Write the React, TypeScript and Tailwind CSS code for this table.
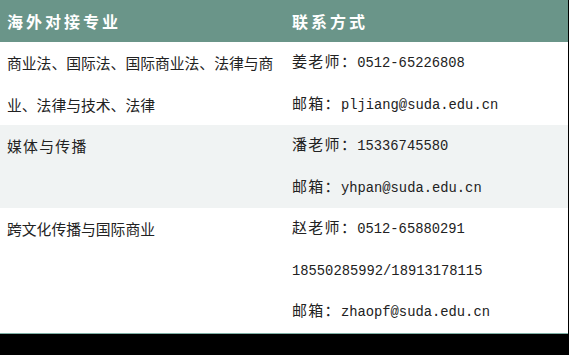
const cjk = '"Noto Sans CJK SC", "Noto Sans", sans-serif';
const mono = '"Liberation Mono", "Noto Sans CJK SC", monospace';

type Line = { label?: string; value: string };

type Row = {
  major: string;
  majorWide?: boolean;
  lines: Line[];
  shaded: boolean;
};

const rows: Row[] = [
  {
    major: '商业法、国际法、国际商业法、法律与商业、法律与技术、法律',
    lines: [
      { label: '姜老师：', value: '0512-65226808' },
      { label: '邮箱：', value: 'pljiang@suda.edu.cn' },
    ],
    shaded: false,
  },
  {
    major: '媒体与传播',
    majorWide: true,
    lines: [
      { label: '潘老师：', value: '15336745580' },
      { label: '邮箱：', value: 'yhpan@suda.edu.cn' },
    ],
    shaded: true,
  },
  {
    major: '跨文化传播与国际商业',
    lines: [
      { label: '赵老师：', value: '0512-65880291' },
      { value: '18550285992/18913178115' },
      { label: '邮箱：', value: 'zhaopf@suda.edu.cn' },
    ],
    shaded: false,
  },
];

export default function App() {
  return (
    <div className="w-[569px] h-[355px] bg-black overflow-hidden">
      <div className="w-[568px] border-b border-[#7fb0a6]">
        {/* 表头 */}
        <div className="flex h-[42px] items-center bg-[#6a9589] text-white font-bold text-[16px] tracking-[3px]" style={{ fontFamily: cjk }}>
          <div className="w-[285px] pl-[7px]">海外对接专业</div>
          <div className="flex-1 pl-[7px]">联系方式</div>
        </div>

        {rows.map((row, i) => (
          <div
            key={i}
            className={`flex text-[#222] ${row.shaded ? 'bg-[#f0f3f3]' : 'bg-white'}`}
          >
            <div
              className={`w-[285px] pl-[7px] pr-[5px] text-[14.8px] leading-[41.5px] ${row.majorWide ? 'tracking-[1.3px]' : ''}`}
              style={{ fontFamily: cjk }}
            >
              {row.major}
            </div>
            <div className="flex-1 pl-[7px]">
              {row.lines.map((l, j) => (
                <div key={j} className="flex h-[41.5px] items-center whitespace-nowrap">
                  <span className="leading-[20px]">
                    {l.label && (
                      <span className="text-[15px] tracking-[1.3px]" style={{ fontFamily: cjk }}>
                        {l.label}
                      </span>
                    )}
                    <span className="text-[13.8px]" style={{ fontFamily: mono }}>
                      {l.value}
                    </span>
                  </span>
                </div>
              ))}
            </div>
          </div>
        ))}
      </div>
    </div>
  );
}
